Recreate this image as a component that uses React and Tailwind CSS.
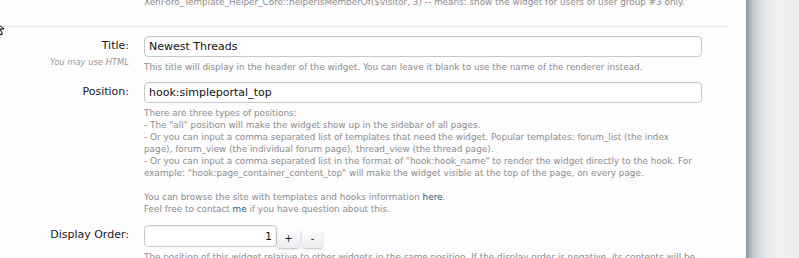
import { useState } from "react";

const help = "text-[8.85px] leading-[12px] text-[#8c8c8c] whitespace-nowrap";

const Field = ({ label, hint, children }) => (
  <div className="flex">
    <div className="w-[130px] shrink-0 pr-[1px] text-right">
      <div className="flex h-[21px] items-center justify-end text-[11px] text-[#1a1a1a]">{label}</div>
      {hint && <div className="mt-[-1px] text-[8.4px] italic leading-[12px] text-[#9a9a9a]">{hint}</div>}
    </div>
    <div className="ml-[14px] flex-1">{children}</div>
  </div>
);

const inputCls =
  "block h-[21px] rounded-[4px] border border-[#c9c9c9] bg-white px-[4px] text-[11px] text-[#111] shadow-[inset_0_1px_2px_rgba(0,0,0,0.06)] outline-none";

const Cursor = () => (
  <svg className="absolute left-[-6px] top-[21px]" width="14" height="16" viewBox="0 0 14 16">
    <path d="M1 1 L1 12 L4 9 L6.5 14 L8.5 13 L6 8 L10 8 Z" fill="#fff" stroke="#000" strokeWidth="1" />
  </svg>
);

export default function App() {
  const [title, setTitle] = useState("Newest Threads");
  const [position, setPosition] = useState("hook:simpleportal_top");
  const [order, setOrder] = useState(1);

  return (
    <div className="flex h-[258px] w-[799px] overflow-hidden font-['DejaVu_Sans',sans-serif]">
      <div className="relative w-[746px] shrink-0 bg-[#fdfdfe] pr-[18px]">
        <Cursor />
        <p className={`${help} mt-[-4px] pl-[144px]`}>
          XenForo_Template_Helper_Core::helperIsMemberOf($visitor, 3) -- means: show the widget for users of user group #3 only.
        </p>
        <div className="mt-[18px] border-t border-[#e4e8eb]" />

        <div className="mt-[9px]">
          <Field label="Title:" hint="You may use HTML">
            <input value={title} onChange={(e) => setTitle(e.target.value)} className={`${inputCls} w-[558px]`} />
            <p className={`${help} mt-[4px]`}>
              This title will display in the header of the widget. You can leave it blank to use the name of the renderer instead.
            </p>
          </Field>
        </div>

        <div className="mt-[9px]">
          <Field label="Position:">
            <input value={position} onChange={(e) => setPosition(e.target.value)} className={`${inputCls} w-[558px]`} />
            <div className={`${help} mt-[4px]`}>
              <p>There are three types of positions:</p>
              <p>- The "all" position will make the widget show up in the sidebar of all pages.</p>
              <p>- Or you can input a comma separated list of templates that need the widget. Popular templates: forum_list (the index</p>
              <p>page), forum_view (the individual forum page), thread_view (the thread page).</p>
              <p>- Or you can input a comma separated list in the format of "hook:hook_name" to render the widget directly to the hook. For</p>
              <p>example: "hook:page_container_content_top" will make the widget visible at the top of the page, on every page.</p>
              <p className="h-[12px]" />
              <p>
                You can browse the site with templates and hooks information <a href="#" className="text-[#1f5a80]">here</a>.
              </p>
              <p>
                Feel free to contact <a href="#" className="text-[#1f5a80]">me</a> if you have question about this.
              </p>
            </div>
          </Field>
        </div>

        <div className="mt-[10px]">
          <Field label="Display Order:">
            <div className="flex items-start">
              <input
                value={order}
                onChange={(e) => setOrder(e.target.value)}
                className={`${inputCls} h-[22px] w-[133px] text-right`}
              />
              <button
                onClick={() => setOrder(Number(order) + 1)}
                className="mt-[3px] h-[20px] w-[23px] rounded-[4px] bg-linear-to-b from-white to-[#ececf0] text-[10px] text-[#222] shadow-[0_1px_2px_rgba(0,0,0,0.25)]"
              >
                +
              </button>
              <button
                onClick={() => setOrder(Number(order) - 1)}
                className="ml-[2px] mt-[3px] h-[20px] w-[21px] rounded-[4px] bg-linear-to-b from-white to-[#ececf0] text-[10px] text-[#222] shadow-[0_1px_2px_rgba(0,0,0,0.25)]"
              >
                -
              </button>
            </div>
            <p className={`${help} mt-[3px]`}>
              The position of this widget relative to other widgets in the same position. If the display order is negative, its contents will be
            </p>
          </Field>
        </div>
      </div>
      <div className="flex-1 bg-[linear-gradient(to_right,#8a969c,#c4cacd_7px,#dfe2e4_16px,#ebecec_26px,#f0f0f0_34px,#eeeeee)]" />
    </div>
  );
}
